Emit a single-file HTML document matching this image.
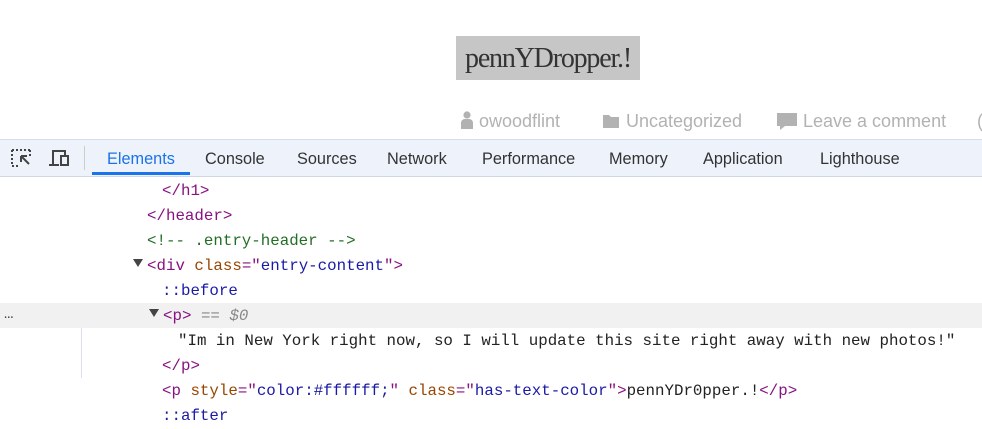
<!DOCTYPE html>
<html><head><meta charset="utf-8"><style>
body{margin:0;width:982px;height:416px;overflow:hidden;background:#fff;position:relative;font-family:"Liberation Sans",sans-serif}
.a{position:absolute;white-space:nowrap}
.title{left:456px;top:36px;width:184px;height:44px;background:#c6c6c6;font-family:"Liberation Serif",serif;font-size:28px;line-height:46px;color:#333;text-align:center;letter-spacing:-1.2px}
.meta{top:110px;font-size:18px;color:#b2b2b2;line-height:22px}
.bar{left:0;top:139px;width:982px;height:36px;background:#eef3fb;border-top:1px solid #d4def0;border-bottom:1px solid #d0d7e3}
.tab{top:140px;height:36px;line-height:38px;font-size:16.3px;color:#333}
.code{font-family:"Liberation Mono",monospace;font-size:15.8px;line-height:25px;color:#222}
.t{color:#881280}.at{color:#994500}.v{color:#1a1aa6}.c{color:#236e25}.ps{color:#1a1aa6}
.tri{position:absolute;width:0;height:0;border-left:5px solid transparent;border-right:5px solid transparent;border-top:8px solid #444}
</style></head><body>
<div class="a title">pennYDropper.!</div>
<div class="a meta" style="left:460px"><svg width="14" height="18" viewBox="0 0 14 18" style="vertical-align:-2px"><circle cx="7" cy="4" r="3.6" fill="#b2b2b2"/><path d="M1 18V12a4 4 0 0 1 4-4h4a4 4 0 0 1 4 4v6z" fill="#b2b2b2"/></svg> owoodflint</div>
<div class="a meta" style="left:603px"><svg width="18" height="14" viewBox="0 0 18 14" style="vertical-align:-1px"><path d="M0 1h6l2 2h8v11H0z" fill="#b2b2b2"/></svg> Uncategorized</div>
<div class="a meta" style="left:776px"><svg width="22" height="20" viewBox="0 0 22 20" style="vertical-align:-4px"><path d="M1 2h20v13H9l-5 4v-4H1z" fill="#b2b2b2"/></svg> Leave a comment</div>
<div class="a meta" style="left:977px">(</div>
<div class="a bar"></div>
<svg class="a" style="left:11px;top:149px" width="22" height="18" viewBox="0 0 22 18"><path d="M1 1h18M1 1v16M1 17h6M19 1v6" stroke="#444" stroke-width="2" stroke-dasharray="2 2" fill="none"/><path d="M10 7l8 8M10 7h6M10 7v6" stroke="#444" stroke-width="2" fill="none"/></svg>
<svg class="a" style="left:47px;top:149px" width="24" height="18" viewBox="0 0 24 18"><path d="M6 15V2h12v4M2 16h10" stroke="#444" stroke-width="2" fill="none"/><rect x="14" y="7" width="7" height="9" stroke="#444" stroke-width="2" fill="none"/></svg>
<div class="a" style="left:84px;top:146px;width:1px;height:24px;background:#ccc"></div>
<div class="a tab" style="left:107px;color:#1a73e8">Elements</div>
<div class="a" style="left:92px;top:172px;width:98px;height:3px;background:#1a73e8"></div>
<div class="a tab" style="left:205px">Console</div>
<div class="a tab" style="left:297px">Sources</div>
<div class="a tab" style="left:387px">Network</div>
<div class="a tab" style="left:482px">Performance</div>
<div class="a tab" style="left:609px">Memory</div>
<div class="a tab" style="left:703px">Application</div>
<div class="a tab" style="left:820px">Lighthouse</div>
<div class="a" style="left:0;top:303px;width:982px;height:25px;background:#f1f1f1"></div>
<div class="a" style="left:81px;top:328px;width:1px;height:50px;background:#dde"></div>
<div class="a code" style="left:4px;top:302px;color:#444">…</div>
<div class="a code" style="left:162px;top:179px"><span class="t">&lt;/h1&gt;</span></div>
<div class="a code" style="left:147px;top:204px"><span class="t">&lt;/header&gt;</span></div>
<div class="a code" style="left:147px;top:229px"><span class="c">&lt;!-- .entry-header --&gt;</span></div>
<div class="tri" style="left:133px;top:259px"></div>
<div class="a code" style="left:147px;top:254px"><span class="t">&lt;div</span> <span class="at">class</span><span class="t">="</span><span class="v">entry-content</span><span class="t">"&gt;</span></div>
<div class="a code" style="left:162px;top:279px"><span class="ps">::before</span></div>
<div class="tri" style="left:149px;top:309px"></div>
<div class="a code" style="left:163px;top:304px"><span class="t">&lt;p&gt;</span> <span style="color:#888">== <i>$0</i></span></div>
<div class="a code" style="left:178px;top:329px">"Im in New York right now, so I will update this site right away with new photos!"</div>
<div class="a code" style="left:162px;top:354px"><span class="t">&lt;/p&gt;</span></div>
<div class="a code" style="left:162px;top:379px"><span class="t">&lt;p</span> <span class="at">style</span><span class="t">="</span><span class="v">color:#ffffff;</span><span class="t">"</span> <span class="at">class</span><span class="t">="</span><span class="v">has-text-color</span><span class="t">"&gt;</span>pennYDr0pper.!<span class="t">&lt;/p&gt;</span></div>
<div class="a code" style="left:162px;top:404px"><span class="ps">::after</span></div>
</body></html>
